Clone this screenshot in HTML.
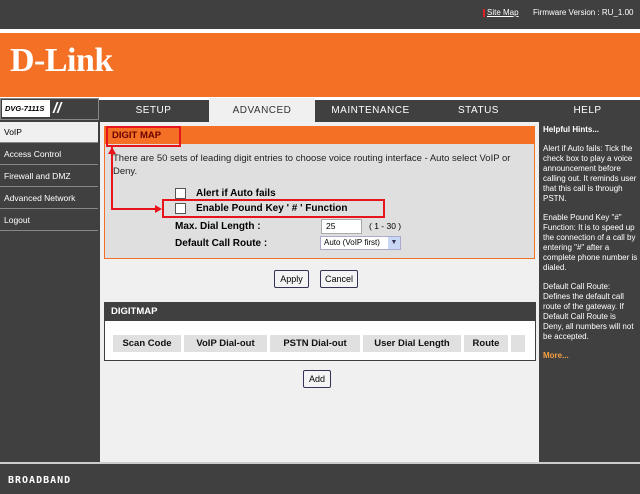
<!DOCTYPE html>
<html><head><style>
*{margin:0;padding:0;box-sizing:border-box}
body{width:640px;height:494px;position:relative;overflow:hidden;background:#404040;font-family:"Liberation Sans",sans-serif;font-size:9px;color:#000}
.a{position:absolute;white-space:nowrap}
.tab{position:absolute;top:100px;height:20px;background:#404040;color:#fff;text-align:center;line-height:22px;font-size:10px;letter-spacing:.5px}
.mi{position:absolute;left:0;width:98px;height:21px;color:#fff;line-height:21px;padding-left:4px;font-size:8.5px;border-bottom:1px solid #888;white-space:nowrap}
.btn{position:absolute;height:18px;border:1px solid #335;border-radius:2px;background:#f4f4f4;font-size:9px;text-align:center;line-height:16px}
.th{position:absolute;top:335px;height:17px;background:#e0e0e0;font-weight:bold;font-size:9.5px;line-height:17px;text-align:center;color:#111;white-space:nowrap}
.w{white-space:normal}
</style></head><body>
<div class="a" style="left:0;top:0;width:640px;height:29px;background:#404040"></div>
<div class="a" style="left:483px;top:9px;width:2px;height:8px;background:#e02020"></div>
<div class="a" style="left:487px;top:8px;color:#fff;font-size:8px;text-decoration:underline">Site Map</div>
<div class="a" style="left:533px;top:8px;color:#fff;font-size:8px">Firmware Version : RU_1.00</div>
<div class="a" style="left:0;top:29px;width:640px;height:4px;background:#fff"></div>
<div class="a" style="left:0;top:33px;width:640px;height:64px;background:#f47024"></div>
<div class="a" style="left:10px;top:42px;color:#fff;font-family:'Liberation Serif',serif;font-weight:bold;font-size:34px;letter-spacing:-0.5px">D-Link</div>
<div class="a" style="left:0;top:97px;width:640px;height:3px;background:#fff"></div>
<div class="a" style="left:0;top:98px;width:99px;height:22px;background:#404040;border:1px solid #888"></div>
<div class="a" style="left:2px;top:100px;width:48px;height:17px;background:#fff;font-style:italic;font-weight:bold;font-size:7.5px;line-height:17px;padding-left:3px">DVG-7111S</div>
<div class="a" style="left:53px;top:101px;color:#fff;font-size:15px;font-weight:bold;line-height:15px;font-style:italic">//</div>
<div class="tab" style="left:101px;width:105px">SETUP</div>
<div class="tab" style="left:209px;top:98px;height:24px;width:106px;background:#f0f0f0;color:#333;line-height:25px">ADVANCED</div>
<div class="tab" style="left:318px;width:105px">MAINTENANCE</div>
<div class="tab" style="left:426px;width:105px">STATUS</div>
<div class="tab" style="left:535px;width:105px">HELP</div>
<div class="mi" style="top:122px;background:#f0f0f0;color:#000">VoIP</div>
<div class="mi" style="top:144px">Access Control</div>
<div class="mi" style="top:166px">Firewall and DMZ</div>
<div class="mi" style="top:188px">Advanced Network</div>
<div class="mi" style="top:210px">Logout</div>
<div class="a" style="left:100px;top:122px;width:439px;height:341px;background:#f0f0f0"></div>
<div class="a" style="left:104px;top:126px;width:431px;height:133px;background:#dfdfdf;border:1px solid #f47024"></div>
<div class="a" style="left:104px;top:126px;width:431px;height:18px;background:#f47024"></div>
<div class="a" style="left:112px;top:130px;color:#600;font-weight:bold;font-size:9.5px">DIGIT MAP</div>
<div class="a" style="left:106px;top:126px;width:75px;height:21px;border:2px solid #e8141c"></div>
<div class="a w" style="left:113px;top:152px;width:420px;font-size:9.5px;line-height:13px;color:#222">There are 50 sets of leading digit entries to choose voice routing interface - Auto select VoIP or Deny.</div>
<div class="a" style="left:175px;top:188px;width:11px;height:11px;border:1px solid #555;background:#fff"></div>
<div class="a" style="left:196px;top:188px;font-weight:bold;font-size:10px">Alert if Auto fails</div>
<div class="a" style="left:175px;top:203px;width:11px;height:11px;border:1px solid #555;background:#fff"></div>
<div class="a" style="left:196px;top:203px;font-weight:bold;font-size:10px">Enable Pound Key ' # ' Function</div>
<div class="a" style="left:162px;top:199px;width:223px;height:19px;border:2px solid #e8141c"></div>
<div class="a" style="left:111px;top:147px;width:2px;height:63px;background:#e8141c"></div>
<div class="a" style="left:111px;top:208px;width:46px;height:2px;background:#e8141c"></div>
<div class="a" style="left:155px;top:205px;border-left:7px solid #e8141c;border-top:4px solid transparent;border-bottom:4px solid transparent"></div>
<div class="a" style="left:108px;top:147px;border-bottom:7px solid #e8141c;border-left:4px solid transparent;border-right:4px solid transparent"></div>
<div class="a" style="left:175px;top:221px;font-weight:bold;font-size:10px">Max. Dial Length :</div>
<div class="a" style="left:321px;top:219px;width:41px;height:15px;background:#fff;border:1px solid #aaa;font-size:8.5px;line-height:13px;padding-left:4px">25</div>
<div class="a" style="left:369px;top:221px;font-size:8.5px">( 1 - 30 )</div>
<div class="a" style="left:175px;top:238px;font-weight:bold;font-size:10px">Default Call Route :</div>
<div class="a" style="left:320px;top:236px;width:81px;height:14px;background:#fff;border:1px solid #aac;font-size:8px;line-height:12px;padding-left:3px">Auto (VoIP first)</div>
<div class="a" style="left:388px;top:237px;width:12px;height:12px;background:#c8d8f4;color:#335;font-size:7px;text-align:center;line-height:12px">▼</div>
<div class="btn" style="left:274px;top:270px;width:35px">Apply</div>
<div class="btn" style="left:320px;top:270px;width:38px">Cancel</div>
<div class="a" style="left:104px;top:302px;width:432px;height:59px;background:#fff;border:1px solid #404040"></div>
<div class="a" style="left:104px;top:302px;width:432px;height:19px;background:#404040;color:#fff;font-weight:bold;font-size:9.5px;line-height:19px;padding-left:7px">DIGITMAP</div>
<div class="th" style="left:113px;width:68px">Scan Code</div>
<div class="th" style="left:184px;width:83px">VoIP Dial-out</div>
<div class="th" style="left:270px;width:90px">PSTN Dial-out</div>
<div class="th" style="left:363px;width:98px">User Dial Length</div>
<div class="th" style="left:464px;width:44px">Route</div>
<div class="th" style="left:511px;width:14px"></div>
<div class="btn" style="left:303px;top:370px;width:28px">Add</div>
<div class="a w" style="left:543px;top:125px;width:95px;color:#fff;font-size:8px;line-height:10px">
<div style="font-weight:bold;margin-bottom:9px">Helpful Hints...</div>
<div style="margin-bottom:9px">Alert if Auto fails: Tick the check box to play a voice announcement before calling out. It reminds user that this call is through PSTN.</div>
<div style="margin-bottom:9px">Enable Pound Key "#" Function: It is to speed up the connection of a call by entering "#" after a complete phone number is dialed.</div>
<div style="margin-bottom:9px">Default Call Route: Defines the default call route of the gateway. If Default Call Route is Deny, all numbers will not be accepted.</div>
<div style="color:#f4a040;font-weight:bold">More...</div>
</div>
<div class="a" style="left:0;top:462px;width:640px;height:2px;background:#ccc"></div>
<div class="a" style="left:8px;top:475px;color:#fff;font-weight:bold;font-size:10px;letter-spacing:1px;font-family:'DejaVu Sans Mono',monospace">BROADBAND</div>
</body></html>
